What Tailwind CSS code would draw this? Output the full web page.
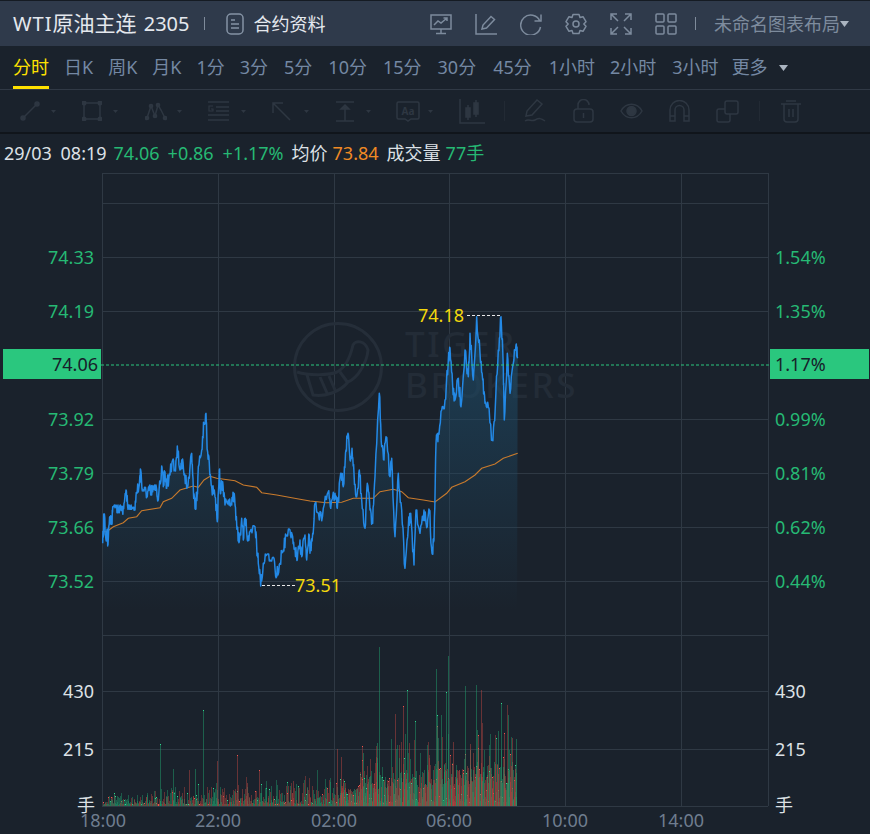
<!DOCTYPE html>
<html lang="zh-CN">
<head>
    <meta charset="UTF-8">
    <title>WTI原油主连 2305</title>
    <script src="https://cdn.jsdelivr.net/npm/@tailwindcss/browser@4"></script>
</head>
<body class="bg-[#1a222c] w-[870px] h-[834px] overflow-hidden font-['Noto_Sans','Noto_Sans_CJK_SC',sans-serif]">
    <!-- Header -->
    <header class="h-[46px] bg-[#2f3a4b] border-t border-[#151b23] flex items-center text-[#e4e8ee]">
        <h1 class="ml-[13px] text-[20px] leading-none whitespace-nowrap [word-spacing:2px]"><span class="tracking-[1px]">WTI</span><span class="text-[21px]">原油主连</span> 2305</h1>
        <div class="ml-[15px] w-px h-[13px] bg-[#7f8b9b]"></div>
        <svg class="ml-[21px] w-[18px] h-[22px]" viewBox="0 0 18 22" fill="none" stroke="#8593a5" stroke-width="1.5">
            <rect x="1" y="1" width="16" height="20" rx="4"/><path d="M5 7h4M5 11h8M5 15h8"/>
        </svg>
        <span class="ml-[9px] text-[18px] leading-none whitespace-nowrap">合约资料</span>
        <div class="ml-auto flex items-center gap-[23px] text-[#7d8b9d]">
            <svg class="w-[22px] h-[22px]" viewBox="0 0 22 22" fill="none" stroke="currentColor" stroke-width="1.5"><path d="M1 2h20v14H1zM11 16v4M6 20.500h10M4 12l4-4 3 2 6-5M13.500 5H17v3"/></svg>
            <svg class="w-[22px] h-[22px]" viewBox="0 0 22 22" fill="none" stroke="currentColor" stroke-width="1.5"><path d="M1 1v20h21M7 16l1-4L16 3.500 19.500 6.500 11.500 15z"/></svg>
            <svg class="w-[22px] h-[22px]" viewBox="0 0 22 22" fill="none" stroke="currentColor" stroke-width="1.500"><path d="M19.800 8A10 10 0 1 0 20.500 14M21 1.500V8h-6.500"/></svg>
            <svg class="w-[22px] h-[22px]" viewBox="0 0 22 22" fill="none" stroke="currentColor" stroke-width="1.500"><path d="M8 1.500h6l1 3 3-.8 3 5-2.200 2.300L21 13.300l-3 5-3-.8-1 3H8l-1-3-3 .8-3-5L3.200 11 1 8.700l3-5 3 .8z" stroke-linejoin="round"/><circle cx="11" cy="11" r="3"/></svg>
            <svg class="w-[22px] h-[22px]" viewBox="0 0 22 22" fill="none" stroke="currentColor" stroke-width="1.500"><path d="M1 7V1h6M1 1l7 7M15 1h6v6M21 1l-7 7M1 15v6h6M1 21l7-7M15 21h6v-6M21 21l-7-7"/></svg>
            <svg class="w-[22px] h-[22px]" viewBox="0 0 22 22" fill="none" stroke="currentColor" stroke-width="1.500"><rect x="1" y="1" width="8" height="8" rx="1"/><rect x="13" y="1" width="8" height="8" rx="1"/><rect x="1" y="13" width="8" height="8" rx="1"/><rect x="13" y="13" width="8" height="8" rx="1"/></svg>
        </div>
        <div class="ml-[18px] w-px h-[13px] bg-[#7f8b9b]"></div>
        <span class="ml-[18px] text-[18px] leading-none whitespace-nowrap text-[#7d8b9d]">未命名图表布局</span>
        <svg class="w-[9px] h-[6px] mr-[21px]" viewBox="0 0 9 6"><path d="M0 0h9L4.500 6z" fill="#aab4c0"/></svg>
    </header>

    <!-- Periods -->
    <nav class="h-[44px] border-b border-[#303945] flex items-start text-[18px] leading-none text-[#7488a3] whitespace-nowrap">
        <a class="ml-[13px] w-[36px] h-[43px] pt-[12px] text-[#ffe100] border-b-[3px] border-[#ffe100]">分时</a>
        <a class="ml-[15px] pt-[12px]">日K</a>
        <a class="ml-[15px] pt-[12px]">周K</a>
        <a class="ml-[15px] pt-[12px]">月K</a>
        <a class="ml-[15px] pt-[12px]">1分</a>
        <a class="ml-[15px] pt-[12px]">3分</a>
        <a class="ml-[16px] pt-[12px]">5分</a>
        <a class="ml-[16px] pt-[12px]">10分</a>
        <a class="ml-[16px] pt-[12px]">15分</a>
        <a class="ml-[16px] pt-[12px]">30分</a>
        <a class="ml-[17px] pt-[12px]">45分</a>
        <a class="ml-[17px] pt-[12px]">1小时</a>
        <a class="ml-[15px] pt-[12px]">2小时</a>
        <a class="ml-[16px] pt-[12px]">3小时</a>
        <a class="ml-[13px] pt-[12px]">更多</a>
        <svg class="ml-[11px] mt-[19px] w-[9px] h-[6px]" viewBox="0 0 9 6"><path d="M0 0h9L4.500 6z" fill="#aab4c0"/></svg>
    </nav>

    <!-- Drawing tools (disabled look) -->
    <div class="h-[44px] border-b-2 border-[#10151b] flex items-center text-[#2e3742]">
        <div class="ml-[20px] flex items-center w-[62px]">
            <svg class="w-[20px] h-[20px]" viewBox="0 0 20 20" fill="none" stroke="currentColor" stroke-width="1.500"><path d="M3 17L17 3"/><circle cx="3" cy="17" r="2" fill="currentColor"/><circle cx="17" cy="3" r="2" fill="currentColor"/></svg>
            <svg class="ml-[11px] w-[5px] h-[3px]" viewBox="0 0 5 3"><path d="M0 0h5L2.500 3z" fill="currentColor"/></svg>
        </div>
        <div class="flex items-center w-[63px]">
            <svg class="w-[20px] h-[20px]" viewBox="0 0 20 20" fill="none" stroke="currentColor" stroke-width="1.500"><rect x="2" y="2" width="16" height="16"/><g fill="currentColor"><circle cx="2" cy="2" r="1.800"/><circle cx="18" cy="2" r="1.800"/><circle cx="2" cy="18" r="1.800"/><circle cx="18" cy="18" r="1.800"/></g></svg>
            <svg class="ml-[11px] w-[5px] h-[3px]" viewBox="0 0 5 3"><path d="M0 0h5L2.500 3z" fill="currentColor"/></svg>
        </div>
        <div class="flex items-center w-[63px]">
            <svg class="w-[22px] h-[20px]" viewBox="0 0 22 20" fill="none" stroke="currentColor" stroke-width="1.500"><path d="M2 17L6 5l4 10 3-11 3 5 4 8"/><g fill="currentColor"><circle cx="2" cy="17" r="1.600"/><circle cx="6" cy="5" r="1.600"/><circle cx="10" cy="15" r="1.600"/><circle cx="13" cy="4" r="1.600"/><circle cx="20" cy="17" r="1.600"/></g></svg>
            <svg class="ml-[10px] w-[5px] h-[3px]" viewBox="0 0 5 3"><path d="M0 0h5L2.500 3z" fill="currentColor"/></svg>
        </div>
        <div class="flex items-center w-[64px]">
            <svg class="w-[21px] h-[20px]" viewBox="0 0 21 20" fill="none" stroke="currentColor" stroke-width="1.500"><path d="M0 1h21M8 6h13M8 10h13M0 14h21M0 19h21"/><path d="M5 5H1v5h4V8H3" stroke-width="1.200"/></svg>
            <svg class="ml-[12px] w-[5px] h-[3px]" viewBox="0 0 5 3"><path d="M0 0h5L2.500 3z" fill="currentColor"/></svg>
        </div>
        <div class="flex items-center w-[63px]">
            <svg class="w-[19px] h-[19px]" viewBox="0 0 19 19" fill="none" stroke="currentColor" stroke-width="1.500"><path d="M1 11V1h10M1 1l17 17"/></svg>
            <svg class="ml-[13px] w-[5px] h-[3px]" viewBox="0 0 5 3"><path d="M0 0h5L2.500 3z" fill="currentColor"/></svg>
        </div>
        <div class="flex items-center w-[61px]">
            <svg class="w-[20px] h-[21px]" viewBox="0 0 20 21" fill="none" stroke="currentColor" stroke-width="1.500"><path d="M1 1h18M1 20h18M10 6v14"/><path d="M6 8l4-4 4 4z" fill="currentColor"/></svg>
            <svg class="ml-[11px] w-[5px] h-[3px]" viewBox="0 0 5 3"><path d="M0 0h5L2.500 3z" fill="currentColor"/></svg>
        </div>
        <div class="flex items-center w-[63px]">
            <svg class="w-[24px] h-[21px]" viewBox="0 0 24 21" fill="none" stroke="currentColor" stroke-width="1.500"><path d="M2.500 1h19A1.500 1.500 0 0 1 23 2.500v14a1.500 1.500 0 0 1-1.500 1.500H15l-3 2-3-2H2.500A1.500 1.500 0 0 1 1 16.500v-14A1.500 1.500 0 0 1 2.500 1z"/><text x="12" y="13.500" text-anchor="middle" font-size="10" font-weight="700" fill="currentColor" stroke="none">Aa</text></svg>
            <svg class="ml-[8px] w-[5px] h-[3px]" viewBox="0 0 5 3"><path d="M0 0h5L2.500 3z" fill="currentColor"/></svg>
        </div>
        <svg class="w-[26px] h-[25px]" viewBox="0 0 26 25" fill="none" stroke="currentColor" stroke-width="1.500"><path d="M1 0v24h25"/><rect x="7" y="9" width="4" height="9" fill="currentColor"/><path d="M9 6v15M17 1v17"/><rect x="15" y="4" width="4" height="11" fill="currentColor"/></svg>
        <div class="ml-[19px] w-px h-[20px] bg-[#222a34]"></div>
        <svg class="ml-[19px] w-[22px] h-[24px]" viewBox="0 0 22 24" fill="none" stroke="currentColor" stroke-width="1.500"><path d="M2 17l1-5L13 1l5 4L8 16zM1 22c4-3 6 1 10-1s6-2 10 1"/></svg>
        <svg class="ml-[27px] w-[21px] h-[24px]" viewBox="0 0 21 24" fill="none" stroke="currentColor" stroke-width="1.500"><rect x="1" y="10" width="19" height="13" rx="3"/><path d="M10.500 14v5M5 10V6a5.500 5.500 0 0 1 11 0"/></svg>
        <svg class="ml-[26px] w-[23px] h-[16px]" viewBox="0 0 23 16" fill="none" stroke="currentColor" stroke-width="1.500"><path d="M1 8c5-9 16-9 21 0-5 9-16 9-21 0z"/><circle cx="11.500" cy="8" r="4.500" fill="currentColor"/></svg>
        <svg class="ml-[26px] w-[21px] h-[22px]" viewBox="0 0 21 22" fill="none" stroke="currentColor" stroke-width="1.500"><path d="M1 21V10a9.500 9.500 0 0 1 19 0v11h-5V10a4.500 4.500 0 0 0-9 0v11zM1 16h5M15 16h5"/></svg>
        <svg class="ml-[26px] w-[23px] h-[23px]" viewBox="0 0 23 23" fill="none" stroke="currentColor" stroke-width="1.500"><rect x="9" y="1" width="13" height="13" rx="2"/><path d="M9 9H3a2 2 0 0 0-2 2v9a2 2 0 0 0 2 2h9a2 2 0 0 0 2-2v-6"/></svg>
        <div class="ml-[20px] w-px h-[20px] bg-[#222a34]"></div>
        <svg class="ml-[21px] w-[20px] h-[23px]" viewBox="0 0 20 23" fill="none" stroke="currentColor" stroke-width="1.500"><path d="M0 4h20M5 1h10M3 4v15a3 3 0 0 0 3 3h8a3 3 0 0 0 3-3V4M8 9v8M12 9v8"/></svg>
    </div>

    <!-- Quote line -->
    <div class="h-[38px] flex items-center pl-[4px] pb-[1px] text-[18px] leading-none whitespace-nowrap text-[#dde1e6]">
        <span class="[word-spacing:4px]">29/03 08:19</span>
        <span class="ml-[7px] text-[#26b974]">74.06</span>
        <span class="ml-[8px] text-[#26b974]">+0.86</span>
        <span class="ml-[9px] text-[#26b974]">+1.17%</span>
        <span class="ml-[8px]">均价</span>
        <span class="ml-[5px] text-[#f08a24]">73.84</span>
        <span class="ml-[8px]">成交量</span>
        <span class="ml-[5px] text-[#26b974]">77手</span>
    </div>

    <!-- Chart canvas, coordinates follow the page (y starts at 172) -->
    <svg id="chart" class="block" width="870" height="662" viewBox="0 172 870 662" font-size="18">
        <defs>
            <linearGradient id="areaFill" gradientUnits="userSpaceOnUse" x1="0" y1="315" x2="0" y2="610">
                <stop offset="0" stop-color="#1e4a66" stop-opacity=".75"/>
                <stop offset="1" stop-color="#1e4a66" stop-opacity="0"/>
            </linearGradient>
        </defs>
        <g id="grid" stroke="#2f3944" stroke-width="1" fill="none"></g>

        <!-- watermark -->
        <g fill="none" stroke="#252e39" stroke-width="3">
            <circle cx="338" cy="367" r="43.500"/>
            <path d="M297 372C310 376 330 375 337 372C345 368 350 358 353 345C355 340 365 340 368 350C367 362 358 378 348 382C340 392 325 397 313 395L307 375M320 377L327 393M329 376L335 390M340 372L348 383"/>
        </g>
        <g fill="#232c37" font-size="35" font-weight="500">
            <text x="405" y="357" letter-spacing="2.500">TIGER</text>
            <text x="405" y="398" letter-spacing="2.500">BROKERS</text>
        </g>

        <path id="area" fill="url(#areaFill)"></path>
        <g id="vol"></g>
        <path id="ma" fill="none" stroke="#c87a2c" stroke-width="1.100"></path>
        <path id="price" fill="none" stroke="#2389e6" stroke-width="1.500" stroke-linejoin="round"></path>

        <!-- current price -->
        <path d="M101 365H770" stroke="#2ac77e" stroke-dasharray="3 2"/>
        <rect x="3" y="349" width="98" height="30" fill="#2ac77e"/>
        <rect x="770" y="349" width="99" height="30" fill="#2ac77e"/>
        <text x="98" y="371" text-anchor="end" fill="#17202a">74.06</text>
        <text x="775" y="371" fill="#17202a">1.17%</text>

        <!-- high / low -->
        <path d="M467 315.500H500M262 585.500H295" stroke="#e8e8e8" stroke-dasharray="3 2"/>
        <text x="418" y="322" fill="#f3d80c">74.18</text>
        <text x="295" y="592" fill="#f3d80c">73.51</text>

        <!-- axis labels -->
        <g fill="#26b974" text-anchor="end">
            <text x="94" y="264">74.33</text>
            <text x="94" y="318">74.19</text>
            <text x="94" y="426">73.92</text>
            <text x="94" y="480">73.79</text>
            <text x="94" y="534">73.66</text>
            <text x="94" y="588">73.52</text>
        </g>
        <g fill="#26b974">
            <text x="775" y="264">1.54%</text>
            <text x="775" y="318">1.35%</text>
            <text x="775" y="426">0.99%</text>
            <text x="775" y="480">0.81%</text>
            <text x="775" y="534">0.62%</text>
            <text x="775" y="588">0.44%</text>
        </g>
        <g fill="#dde1e6">
            <text x="94" y="698" text-anchor="end">430</text>
            <text x="94" y="756" text-anchor="end">215</text>
            <text x="95" y="812" text-anchor="end">手</text>
            <text x="775" y="698">430</text>
            <text x="775" y="756">215</text>
            <text x="775" y="812">手</text>
        </g>
        <g fill="#6f7d8f" text-anchor="middle">
            <text x="103" y="827">18:00</text>
            <text x="218" y="827">22:00</text>
            <text x="334" y="827">02:00</text>
            <text x="449" y="827">06:00</text>
            <text x="565" y="827">10:00</text>
            <text x="681" y="827">14:00</text>
        </g>
    </svg>

    <script>
        // traced points, first block in crop 1 coordinates, second block in crop 2
        const priceA = [[8,430],[12,345],[18,420],[22,390],[24,435],[30,350],[35,370],[38,320],[50,318],[55,335],[62,318],[68,340],[72,310],[78,270],[84,328],[90,318],[98,325],[105,330],[110,280],[118,255],[122,210],[128,270],[135,265],[142,290],[148,258],[155,285],[160,258],[170,268],[175,300],[185,198],[190,260],[195,215],[200,265],[208,222],[218,180],[225,210],[232,138],[240,210],[245,180],[252,225],[262,262],[268,235],[275,160],[280,265],[285,325],[292,280],[295,200],[305,150],[312,70],[318,40],[322,150],[328,190],[335,260],[345,290],[352,365],[358,210],[362,280],[368,245],[375,315],[385,300],[395,315],[400,280],[405,315],[412,385],[418,425],[425,355],[430,420],[436,355],[442,420],[450,395],[465,380],[470,440],[475,490],[482,558],[490,490],[500,465],[510,480],[522,475],[530,530],[540,490],[550,450],[558,405],[570,390],[578,410],[585,445],[592,480],[600,420],[605,470],[615,405],[620,480],[628,405],[640,370],[645,310],[652,320],[660,360]];
        const priceB = [[0,760],[8,700],[15,610],[28,660],[40,625],[55,575],[62,625],[75,580],[82,625],[92,520],[100,560],[108,450],[114,400],[120,480],[126,445],[132,520],[140,590],[148,510],[155,600],[165,685],[172,550],[180,630],[188,670],[195,530],[208,280],[215,440],[222,480],[228,410],[240,530],[245,475],[255,710],[265,520],[275,630],[285,805],[295,680],[302,640],[312,795],[318,630],[330,700],[342,630],[352,680],[358,630],[366,760],[372,720],[378,430],[385,400],[395,330],[405,300],[415,180],[420,145],[428,260],[435,300],[445,235],[453,320],[465,150],[475,230],[480,100],[490,240],[500,50],[510,160],[518,240],[525,310],[535,320],[547,420],[556,320],[565,150],[573,50],[580,200],[583,360],[592,160],[600,280],[610,190],[618,135],[623,170]];
        const maA = [[10,395],[20,395],[40,380],[70,368],[85,355],[110,350],[125,332],[180,323],[190,305],[215,295],[240,270],[280,258],[295,262],[312,240],[330,229],[350,235],[405,242],[430,255],[470,262],[485,278],[530,285],[600,298],[660,308]];
        const maB = [[0,603],[50,608],[95,607],[130,595],[190,595],[210,575],[250,568],[275,575],[295,593],[340,600],[375,606],[410,580],[425,562],[465,545],[495,525],[515,505],[555,492],[580,475],[623,460]];

        let seed = 12345;
        const rnd = () => (seed = (seed * 16807) % 2147483647) / 2147483647;

        const toPage = (pts, ox, oy) => pts.map(p => [ox + p[0] / 3, oy + p[1] / 3]);
        const cutA = priceA.filter(p => 100 + p[0] / 3 < 310);
        const traced = toPage(cutA, 100, 400).concat(toPage(priceB, 310, 300));
        const maPts = toPage(maA.filter(p => 100 + p[0] / 3 < 310), 100, 400).concat(toPage(maB, 310, 300));
        const line = pts => 'M' + pts.map(p => p[0].toFixed(1) + ' ' + p[1].toFixed(1)).join('L');

        // roughen the trace so the line has tick-level noise, extremes stay on the traced points
        const pricePts = [];
        traced.forEach((p, i) => {
            pricePts.push(p);
            const q = traced[i + 1];
            if (!q) return;
            const lo = Math.min(p[1], q[1]) - 1, hi = Math.max(p[1], q[1]) + 1;
            for (let t = .2; t < .95; t += .2) {
                const y = p[1] + (q[1] - p[1]) * t + (rnd() - .5) * 16;
                pricePts.push([p[0] + (q[0] - p[0]) * t, Math.min(hi, Math.max(lo, y))]);
            }
        });

        document.getElementById('price').setAttribute('d', line(pricePts));
        document.getElementById('ma').setAttribute('d', line(maPts));
        document.getElementById('area').setAttribute('d', line(traced) + 'L517 635L103 635Z');

        // grid
        let grid = '';
        [173, 203, 257, 311, 419, 473, 527, 581, 635, 691, 749, 806].forEach(y => {
            grid += `<path d="M102 ${y + .5}H768"/>`;
        });
        [102, 218, 334, 449, 565, 681, 768].forEach(x => {
            grid += `<path d="M${x + .5} 173V806"/>`;
        });
        document.getElementById('grid').innerHTML = grid;

        // volume bars: traced spikes + seeded filler
        const spikes = [[160,744,'g'],[203,710,'g'],[237,755,'r'],[217,761,'r'],[173,769,'g'],[189,770,'r'],[195,769,'g'],[259,770,'r'],[293,781,'r'],[298,786,'g'],[247,783,'r'],[379,647,'g'],[436,669,'g'],[448,656,'g'],[446,692,'g'],[407,690,'g'],[403,706,'r'],[395,714,'r'],[415,721,'g'],[437,715,'g'],[441,715,'g'],[465,686,'g'],[476,685,'g'],[481,690,'r'],[501,703,'g'],[508,715,'g'],[504,733,'r'],[498,731,'g'],[512,738,'r'],[516,739,'g'],[453,742,'r'],[470,744,'r'],[478,735,'r'],[337,749,'r'],[341,757,'r'],[363,753,'g'],[377,743,'g']];
        const envelope = x => x < 160 ? 7 : x < 345 ? 9 + (x - 160) * .05 : x < 360 ? 18 : 30 + (x - 360) * .12;
        let vol = '';
        const bar = (x, top, kind, op, tipChance) => {
            const c = kind === 'g' ? '#1f9e6c' : '#b5443f';
            const tip = kind === 'g' ? '#2fd98f' : '#f0534c';
            vol += `<rect x="${x}" y="${top}" width="1" height="${806 - top}" fill="${c}" opacity="${op}"/>`;
            if (rnd() < tipChance) vol += `<rect x="${x}" y="${top}" width="1" height="1" fill="${tip}"/>`;
        };
        for (let x = 103; x < 517; x += 1) {
            for (let k = 0; k < 2; k++) {
                const h = envelope(x) * (rnd() * rnd() * 2.2 + .05);
                bar(x, Math.round(805 - h), rnd() < .5 ? 'g' : 'r', .45, .15);
            }
        }
        // solid block near the baseline on the busy side
        for (let x = 340; x < 517; x += 1) {
            const h = envelope(x) * (.45 + rnd() * .5);
            bar(x, Math.round(805 - h), rnd() < .5 ? 'g' : 'r', .5, .1);
        }
        spikes.forEach(s => bar(s[0], s[1], s[2], .5, .3));
        document.getElementById('vol').innerHTML = vol;
    </script>
</body>
</html>
